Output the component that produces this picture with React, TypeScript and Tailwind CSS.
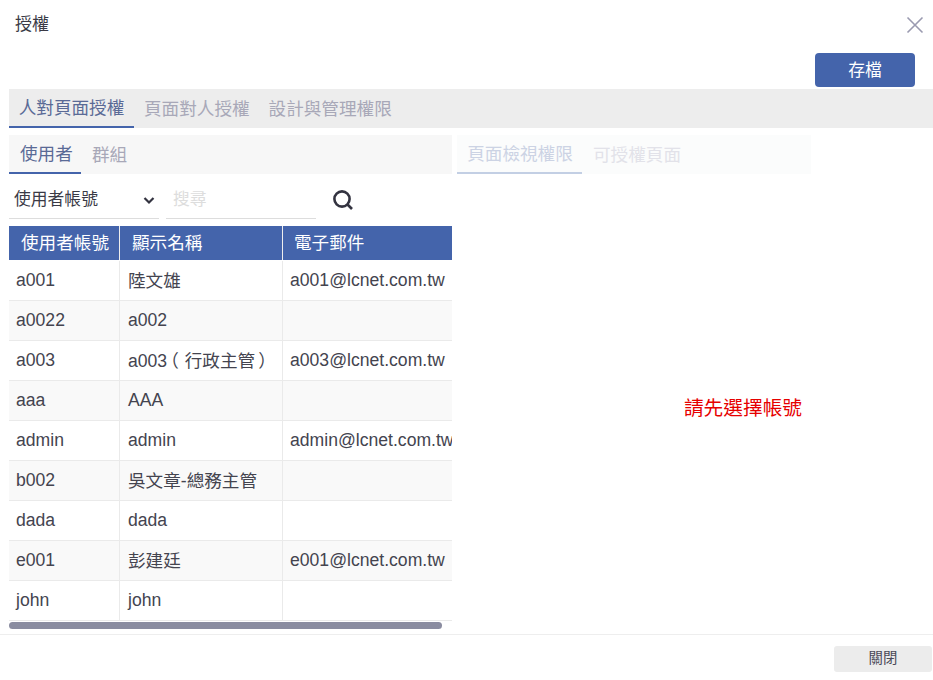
import React from "react";

const rows: [string, React.ReactNode, string, boolean][] = [
  ["a001", "陸文雄", "a001@lcnet.com.tw", false],
  ["a0022", "a002", "", true],
  [
    "a003",
    <>
      a003<span className="inline-block -translate-x-[6px]">（</span>行政主管<span className="inline-block translate-x-[3px]">）</span>
    </>,
    "a003@lcnet.com.tw",
    false,
  ],
  ["aaa", "AAA", "", true],
  ["admin", "admin", "admin@lcnet.com.tw", true],
  ["b002", "吳文章-總務主管", "", false],
  ["dada", "dada", "", true],
  ["e001", "彭建廷", "e001@lcnet.com.tw", false],
  ["john", "john", "", true],
];

export default function App() {
  return (
    <div className="w-[933px] h-[680px] bg-white overflow-hidden flex flex-col text-[#3a3a46] font-['Liberation_Sans','Noto_Sans_CJK_TC',sans-serif]">
      <div className="h-[48px] flex items-center justify-between pl-[15px] pr-[9px] text-[17px] pt-[1px]">
        <span>授權</span>
        <svg width="18" height="18" viewBox="0 0 18 18" fill="none" stroke="#9a9ab0" strokeWidth="1.6">
          <path d="M1.5 1.5L16.5 16.5M16.5 1.5L1.5 16.5" />
        </svg>
      </div>
      <div className="h-[41px] pt-[5px] pr-[18px] flex justify-end">
        <button className="w-[100px] h-[34px] rounded-[4px] bg-[#4464ab] text-white text-[16.8px] pt-[1px]">存檔</button>
      </div>
      <div className="ml-[9px] h-[39px] bg-[#ededed] flex text-[17.6px] text-[#a8a8b8]">
        <div className="w-[125px] h-[39px] border-b-2 border-[#4464ab] text-[#5a6a96] flex items-center justify-center pt-[2px]">人對頁面授權</div>
        <div className="ml-[10px] flex items-center pt-[1px]">頁面對人授權</div>
        <div className="ml-[19px] flex items-center pt-[1px]">設計與管理權限</div>
      </div>
      <div className="flex flex-1 pl-[9px] pt-[7px] min-h-0">
        <div className="w-[443px] flex flex-col overflow-hidden">
          <div className="h-[39px] bg-[#f7f7f7] flex text-[17.6px] text-[#a8a8b8] shrink-0">
            <div className="w-[72px] h-[39px] border-b-2 border-[#4464ab] text-[#5a6a96] pl-[11px] flex items-center pt-[2px]">使用者</div>
            <div className="ml-[11px] flex items-center pt-[1px]">群組</div>
          </div>
          <div className="h-[52px] flex items-start pt-[7px] shrink-0">
            <div className="w-[150px] h-[38px] border-b border-[#dddddd] flex items-center justify-between pl-[5px] pr-[3px] text-[16.8px]">
              <span>使用者帳號</span>
              <svg width="14" height="14" viewBox="0 0 14 14" fill="none" stroke="#333340" strokeWidth="2.2">
                <path d="M2.5 5L7 9.5L11.5 5" />
              </svg>
            </div>
            <div className="ml-[7px] w-[150px] h-[38px] border-b border-[#dddddd] flex items-center pl-[7px] text-[16.8px] text-[#dddddd]">搜尋</div>
            <svg className="ml-[16px] mt-[8px]" width="22" height="22" viewBox="0 0 22 22" fill="none" stroke="#333340" strokeWidth="2.6">
              <circle cx="10" cy="10" r="7.6" />
              <path d="M15.5 15.5L20 20" />
            </svg>
          </div>
          <div className="h-[34px] bg-[#4464ab] text-white text-[17.6px] flex shrink-0">
            <div className="w-[111px] border-r border-[#eeeeee] flex items-center pl-[12px] pt-[1px]">使用者帳號</div>
            <div className="w-[163px] border-r border-[#eeeeee] flex items-center pl-[12px] pt-[1px]">顯示名稱</div>
            <div className="flex-1 flex items-center pl-[11px] pt-[1px]">電子郵件</div>
          </div>
          <div className="text-[17.6px] leading-[24px] text-[#44444f] pt-[1px] shrink-0">
            {rows.map((r, i) => (
              <div key={r[0]} className={`h-[40px] flex border-b border-[#eaeaea] ${i % 2 ? "bg-[#f9f9f9]" : "bg-white"}`}>
                <div className="w-[111px] shrink-0 border-r border-[#eaeaea] flex items-center pl-[7px] pb-[1px]">{r[0]}</div>
                <div className={`w-[163px] shrink-0 border-r border-[#eaeaea] flex items-center pl-[8px] whitespace-nowrap ${r[3] ? "pb-[1px]" : ""}`}>{r[1]}</div>
                <div className="flex-1 flex items-center pl-[7px] pb-[1px] whitespace-nowrap">{r[2]}</div>
              </div>
            ))}
          </div>
          <div className="h-[7px] w-[433px] mt-[1px] rounded-full bg-[#8a8ca0] shrink-0" />
        </div>
        <div className="flex-1 flex flex-col pl-[5px]">
          <div className="w-[354px] h-[39px] bg-[#fbfcfc] flex text-[17.6px] shrink-0">
            <div className="w-[125px] h-[39px] border-b-2 border-[#c3cfe4] text-[#ccd3e4] flex items-center justify-center pl-[1px] pt-[2px]">頁面檢視權限</div>
            <div className="ml-[11px] flex items-center text-[#e2e2e9] pt-[1px]">可授權頁面</div>
          </div>
          <div className="flex-1 flex items-start justify-center text-[#e60000] text-[19.7px] pl-[96px] pt-[220px]">請先選擇帳號</div>
        </div>
      </div>
      <div className="h-[46px] border-t border-[#eeeeee] flex items-start pt-[11px] justify-end pr-px shrink-0">
        <button className="w-[98px] h-[26px] rounded-[3px] bg-[#ececec] text-[#4a4a58] text-[14.4px]">關閉</button>
      </div>
    </div>
  );
}
